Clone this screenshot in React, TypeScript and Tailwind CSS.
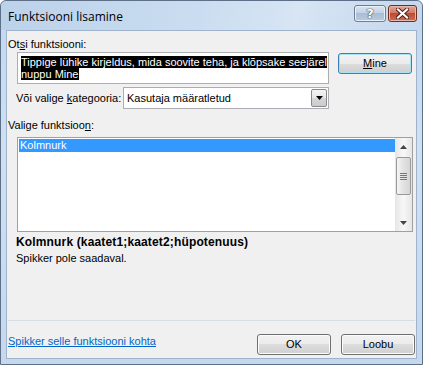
import React from "react";

const font = { fontFamily: '"Liberation Sans", Arial, sans-serif' };

function VistaButton({ label, u, focused, className = "" }: { label: string; u?: number; focused?: boolean; className?: string }) {
  const chars = label.split("");
  return (
    <div
      className={`relative flex items-center justify-center w-[74px] h-[21px] rounded-[3px] border text-[11px] text-black ${
        focused ? "border-[#3c7fb1] shadow-[inset_0_0_0_1px_#a8e2f7]" : "border-[#707070] shadow-[inset_0_0_0_1px_#fbfbfb]"
      } bg-[linear-gradient(to_bottom,#f2f2f2_0%,#ebebeb_50%,#dddddd_50%,#cfcfcf_100%)] ${className}`}
    >
      <span>
        {chars.map((c, i) => (
          <span key={i} className={u === i ? "underline" : ""}>
            {c}
          </span>
        ))}
      </span>
    </div>
  );
}

export default function App() {
  return (
    <div className="w-[423px] h-[365px] bg-white" style={font}>
      <div className="w-[423px] h-[365px] flex flex-col rounded-t-[6px] border border-[#5d7088] bg-[linear-gradient(to_bottom,#c2d6ed_0%,#cfe0f2_40%,#c5d8ee_100%)]">
        {/* Title bar */}
        <div className="h-[29px] flex items-start justify-between pl-[7px] pr-[5px] bg-[linear-gradient(100deg,#bcd2ea_0%,#c9dcf0_45%,#d7e5f4_70%,#c4d7ec_100%)] rounded-t-[6px]">
          <div className="mt-[8px] text-[12px] leading-[15px] text-black" style={{ fontFamily: '"Open Sans", "Liberation Sans", sans-serif' }}>
            Funktsiooni lisamine
          </div>
          <div className="flex mt-[4px] gap-[2px]">
            <div className="w-[32px] h-[17px] rounded-[3px] border border-[#6f7f93] bg-[linear-gradient(to_bottom,#d9e4f1_0%,#c3d3e6_45%,#a9bdd6_50%,#b9cbe0_100%)] flex items-center justify-center shadow-[inset_0_0_0_1px_#e8f0f8]">
              <span className="text-[13px] font-bold leading-none text-white" style={{ textShadow: "0 0 1px #37475c, 0 0 1px #37475c, 0 0 1px #37475c", fontFamily: '"DejaVu Sans", sans-serif' }}>
                ?
              </span>
            </div>
            <div className="w-[29px] h-[17px] rounded-[3px] border border-[#6b2f25] bg-[linear-gradient(to_bottom,#e4a597_0%,#d27a67_45%,#c04a30_50%,#d06a4f_100%)] flex items-center justify-center shadow-[inset_0_0_0_1px_#e9b7ac]">
              <svg width="13" height="11" viewBox="0 0 13 11">
                <path d="M2 1.5 L11 9.5 M11 1.5 L2 9.5" stroke="#4a1a12" strokeWidth="4" strokeLinecap="square" />
                <path d="M2 1.5 L11 9.5 M11 1.5 L2 9.5" stroke="#ffffff" strokeWidth="2.2" strokeLinecap="square" />
              </svg>
            </div>
          </div>
        </div>

        {/* Middle with side frames */}
        <div className="flex-1 flex px-[5px] pb-[5px]">
          <div className="flex-1 flex flex-col bg-[#f0f0f0] border border-[#9fb4cc] text-[11px] text-black">
            {/* Label 1 */}
            <div className="mt-[6px] ml-[1px] h-[14px] leading-[14px]">
              Ot<span className="underline">s</span>i funktsiooni:
            </div>
            {/* Textbox row */}
            <div className="mt-[1px] flex items-start">
              <div className="ml-[10px] w-[312px] h-[32px] border border-[#abadb3] bg-white pl-[3px] pt-[3px] leading-[12px] text-white">
                <span className="bg-black">Tippige lühike kirjeldus, mida soovite teha, ja klõpsake seejärel</span>
                <br />
                <span className="bg-black">nuppu Mine</span>
              </div>
              <VistaButton label="Mine" u={0} focused className="ml-[9px] mt-[1px]" />
            </div>
            {/* Category row */}
            <div className="mt-[3px] flex items-center h-[22px]">
              <div className="ml-[9px] w-[107px]">
                Või valige <span className="underline">k</span>ategooria:
              </div>
              <div className="w-[206px] h-[22px] border border-[#abadb3] bg-white flex items-center">
                <div className="flex-1 pl-[3px]">Kasutaja määratletud</div>
                <div className="w-[16px] h-[18px] mr-[1px] border border-[#8a8a8a] rounded-[2px] bg-[linear-gradient(to_bottom,#f4f4f4_0%,#e6e6e6_50%,#d6d6d6_50%,#cbcbcb_100%)] flex items-center justify-center">
                  <svg width="7" height="4" viewBox="0 0 7 4">
                    <path d="M0 0 H7 L3.5 4 Z" fill="#000" />
                  </svg>
                </div>
              </div>
            </div>
            {/* Label 3 */}
            <div className="mt-[9px] ml-[1px] h-[14px] leading-[14px]">
              Valige funktsioo<span className="underline">n</span>:
            </div>
            {/* List */}
            <div className="mt-[5px] ml-[10px] w-[396px] h-[95px] border border-[#a0a0a0] bg-white flex">
              <div className="flex-1 pt-[1px] pl-[1px]">
                <div className="h-[13px] leading-[13px] bg-[#3399ff] text-white pl-[1px]">Kolmnurk</div>
              </div>
              <div className="w-[17px] flex flex-col bg-[linear-gradient(to_right,#e6e6e6,#f7f7f7,#e6e6e6)]">
                <div className="h-[17px] flex items-center justify-center">
                  <svg width="7" height="4" viewBox="0 0 7 4">
                    <path d="M0 4 H7 L3.5 0 Z" fill="#444" />
                  </svg>
                </div>
                <div className="mt-[2px] mx-[1px] h-[38px] rounded-[2px] border border-[#9a9a9a] bg-[linear-gradient(to_right,#f4f4f4,#e2e2e2_50%,#d6d6d6)] flex flex-col items-center justify-center gap-[1px]">
                  <div className="w-[7px] h-[1px] bg-[#777]" />
                  <div className="w-[7px] h-[1px] bg-[#777]" />
                  <div className="w-[7px] h-[1px] bg-[#777]" />
                  <div className="w-[7px] h-[1px] bg-[#777]" />
                </div>
                <div className="flex-1" />
                <div className="h-[17px] flex items-center justify-center">
                  <svg width="7" height="4" viewBox="0 0 7 4">
                    <path d="M0 0 H7 L3.5 4 Z" fill="#444" />
                  </svg>
                </div>
              </div>
            </div>
            {/* Bold description */}
            <div className="mt-[3px] ml-[9px] h-[14px] leading-[14px] font-bold text-[12px] tracking-[0.15px]">Kolmnurk (kaatet1;kaatet2;hüpotenuus)</div>
            <div className="mt-[2px] ml-[9px] h-[14px] leading-[14px]">Spikker pole saadaval.</div>
            <div className="flex-1" />
            {/* Separator */}
            <div className="mx-[1px] h-[1px] bg-[#d5dee6]" />
            {/* Bottom row */}
            <div className="mt-[13px] mb-[3px] flex items-start">
              <div className="ml-[1px] h-[14px] leading-[14px] text-[#0066cc] underline">Spikker selle funktsiooni kohta</div>
              <div className="flex-1" />
              <VistaButton label="OK" />
              <VistaButton label="Loobu" className="ml-[10px] mr-[1px]" />
            </div>
          </div>
        </div>
      </div>
    </div>
  );
}
